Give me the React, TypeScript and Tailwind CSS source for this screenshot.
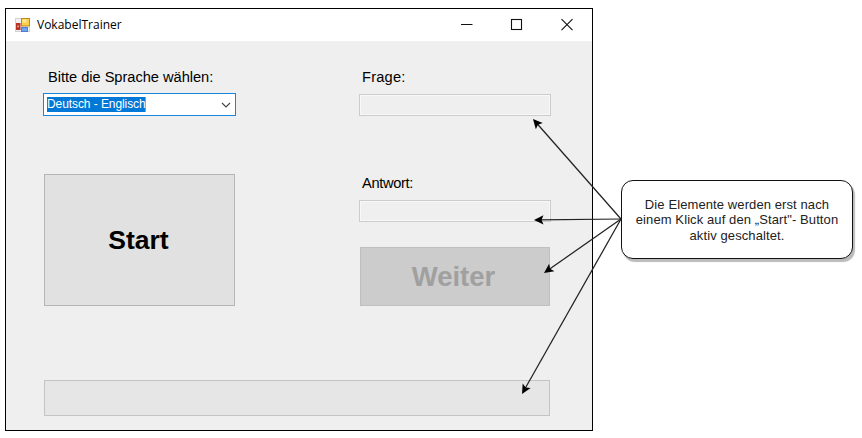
import React from "react";

const SANS = "font-['Liberation_Sans',Arial,sans-serif]";

const TARGETS: [number, number][] = [
  [533, 119],
  [534, 220],
  [544, 273],
  [522, 394],
];
const ORIGIN: [number, number] = [621, 219];

function Arrow({ to }: { to: [number, number] }) {
  const angle = (Math.atan2(to[1] - ORIGIN[1], to[0] - ORIGIN[0]) * 180) / Math.PI;
  const length = Math.hypot(to[0] - ORIGIN[0], to[1] - ORIGIN[1]);
  return (
    <g transform={`translate(${ORIGIN[0]} ${ORIGIN[1]}) rotate(${angle})`}>
      <line x1="0" y1="0" x2={length - 6} y2="0" stroke="#222" strokeWidth="1.25" />
      <path d={`M${length} 0 l-9.500 -4.600 l2 4.600 l-2 4.600 z`} fill="#000" />
    </g>
  );
}

function FormsIcon() {
  return (
    <svg width="16" height="16" viewBox="0 0 16 16">
      <rect x="0.5" y="1.5" width="14" height="13" fill="#f2f2f2" stroke="#d2d2d2" />
      <rect x="1" y="6" width="4.5" height="7" fill="#b83225" />
      <rect x="2.2" y="8.5" width="1.8" height="1.8" fill="#e79a92" />
      <rect x="6.5" y="1.5" width="8" height="7.5" fill="#fbcf4b" stroke="#bd8a20" />
      <rect x="7.5" y="2.5" width="4" height="3" fill="#ffe799" />
      <rect x="6.5" y="10.5" width="6" height="4" fill="#6fa3ee" stroke="#4e7fd0" />
    </svg>
  );
}

function TitleBar() {
  return (
    <div className="flex h-8 items-center bg-white pl-[9px]">
      <FormsIcon />
      <span className="ml-[6px] -mt-px w-[120px] font-['Open_Sans','Noto_Sans',sans-serif] text-[12px] leading-4 text-black">
        VokabelTrainer
      </span>
      <svg className="ml-auto mr-[19px]" width="112" height="14" viewBox="0 0 112 14" fill="none" stroke="#111">
        <path d="M0 6.500h11.500" strokeWidth="1" />
        <rect x="50.500" y="1.500" width="10" height="10" strokeWidth="1.1" />
        <path d="M100.500 1.200l11 11M111.500 1.200l-11 11" strokeWidth="1.1" />
      </svg>
    </div>
  );
}

function DisabledField() {
  return (
    <div className="h-[22px] w-[192px] border border-[#cccccc] bg-[#efefef] shadow-[inset_0_0_0_1px_#f8f8f8]" />
  );
}

function AppWindow() {
  return (
    <div className="ml-[5px] mt-2 h-[423px] w-[588px] shrink-0 border border-black bg-[#efefef]">
      <TitleBar />
      <div className="flex pl-[37px] pt-[26px]">
        <div className="w-[316px]">
          <div className="h-[26px] whitespace-nowrap pl-[5px] text-[14.67px] leading-5 tracking-[-0.04px]">
            Bitte die Sprache wählen:
          </div>
          <div className="flex h-[23px] w-[193px] items-center border border-solid border-[#1a84da] bg-white pl-[3px] pr-1">
            <span className="-mt-px h-[15px] w-[99px] whitespace-nowrap border-r border-solid border-[#ff8728] bg-[#0078d7] text-[12px] leading-[15px] tracking-[-0.08px] text-white">
              Deutsch - Englisch
            </span>
            <svg className="ml-auto mt-px" width="10" height="6" viewBox="0 0 10 6" fill="none" stroke="#444" strokeWidth="1.1">
              <path d="M1 1l4 4 4-4" />
            </svg>
          </div>
          <div className="ml-px mt-[58px] flex h-[132px] w-[191px] items-center justify-center border border-[#b5b5b5] bg-[#e1e1e1] pr-[2px] text-[26.500px] font-bold leading-8">
            Start
          </div>
        </div>
        <div className="w-[192px]">
          <div className="h-[27px] pl-[3px] text-[14.67px] leading-5 tracking-[0.2px]">Frage:</div>
          <DisabledField />
          <div className="mt-[57px] h-[27px] pl-[3px] text-[14.67px] leading-5 tracking-[-0.35px]">Antwort:</div>
          <DisabledField />
          <div className="ml-px mt-[25px] flex h-[59px] w-[190px] items-center justify-center border border-[#bfbfbf] bg-[#cccccc] pr-[3px] text-[27.500px] font-bold leading-8 text-[#a0a0a0]">
            Weiter
          </div>
        </div>
      </div>
      <div className="ml-[38px] mt-[74px] h-9 w-[506px] border border-[#c4c4c4] bg-[#e6e6e6]" />
    </div>
  );
}

export default function App() {
  return (
    <div className={`relative flex h-[438px] w-[862px] items-start overflow-hidden bg-white text-black ${SANS}`}>
      <AppWindow />
      <div className="ml-7 mt-[180px] flex h-[79px] w-[232px] items-center justify-center rounded-[12px] border border-[#111] bg-white pt-px text-center text-[13px] leading-[15.500px] tracking-[0.1px] text-[#222] shadow-[2px_3px_1px_#bbb]">
        <div className="whitespace-nowrap">
          Die Elemente werden erst nach
          <br />
          einem Klick auf den „Start"- Button
          <br />
          aktiv geschaltet.
        </div>
      </div>
      <svg className="pointer-events-none absolute inset-0" width="862" height="438" viewBox="0 0 862 438">
        {TARGETS.map((to) => (
          <Arrow key={to.join()} to={to} />
        ))}
      </svg>
    </div>
  );
}
